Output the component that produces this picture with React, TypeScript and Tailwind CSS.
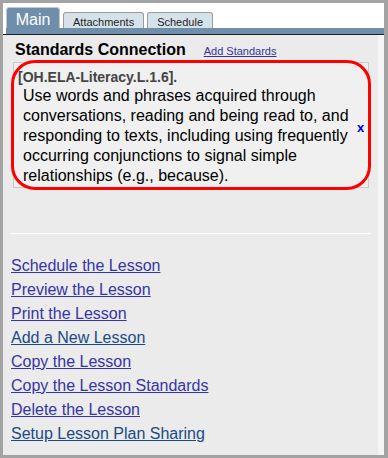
import type { ReactNode } from "react";

const font = "font-['Liberation_Sans',Arial,sans-serif]";

const links = [
  { label: "Schedule the Lesson", visited: true },
  { label: "Preview the Lesson", visited: true },
  { label: "Print the Lesson", visited: true },
  { label: "Add a New Lesson", visited: false },
  { label: "Copy the Lesson", visited: true },
  { label: "Copy the Lesson Standards", visited: true },
  { label: "Delete the Lesson", visited: true },
  { label: "Setup Lesson Plan Sharing", visited: false },
];

function Tab({ children }: { children: ReactNode }) {
  return (
    <div className="flex h-[16px] items-start rounded-t-[3px] border border-b-0 border-[#9c9c9c] bg-[#d6e2ea] px-[9px] pt-[2px] text-[11px] leading-[14px] text-[#222]">
      {children}
    </div>
  );
}

export default function App() {
  return (
    <div
      className={`${font} flex h-[458px] w-[388px] flex-col border-b-[3px] border-l-[3px] border-r-[4px] border-t-[3px] border-[#a3a3a3] bg-white`}
    >
      {/* tabs */}
      <div className="flex h-[25px] items-end gap-[3px] pl-[3px]">
        <div className="flex h-[21px] w-[54px] items-start justify-center rounded-t-[3px] border border-b-0 border-[#c6c6c6] bg-[#6f8eab] pt-[4px] text-[16px] leading-[16px] text-white">
          Main
        </div>
        <Tab>Attachments</Tab>
        <Tab>Schedule</Tab>
      </div>
      <div className="ml-[3px] h-[6px] bg-[#6f8eab]" />
      <div className="h-px bg-[#1e1e1e]" />

      {/* content */}
      <div className="flex flex-1">
        <div className="flex-1 bg-[#ebebeb]">
          <div className="flex items-baseline gap-[18px] pl-[12px] pt-[5px]">
            <h2 className="text-[16px] font-bold leading-[20px] text-black">Standards Connection</h2>
            <a href="#" className="text-[11px] leading-[14px] text-[#3333a0] underline">
              Add Standards
            </a>
          </div>

          <div className="pl-[10px] pt-[2px]">
            <div className="relative w-[356px]">
              <div className="flex border border-[#c8c8c8] bg-[#f0f0f0] pb-[1px] pl-[4px] pt-[5px]">
                <div className="w-[339px]">
                  <div className="text-[14px] font-bold leading-[18px] text-[#444]">
                    [OH.ELA-Literacy.L.1.6].
                  </div>
                  <p className="pl-[5px] text-[16px] leading-[20px] text-black">
                    Use words and phrases acquired through conversations, reading and being read to, and
                    responding to texts, including using frequently occurring conjunctions to signal simple
                    relationships (e.g., because).
                  </p>
                </div>
                <div className="flex flex-1 items-center">
                  <span className="text-[13px] font-bold leading-none text-[#0000dd]">x</span>
                </div>
              </div>
              {/* annotation ring */}
              <div className="pointer-events-none absolute -inset-[2px] rounded-[24px] border-[3px] border-[#ff0000]" />
            </div>
          </div>

          <div className="ml-[8px] mt-[45px] h-px w-[360px] bg-white" />

          <div className="flex flex-col items-start pl-[8px] pt-[20px]">
            {links.map((l) => (
              <a
                key={l.label}
                href="#"
                className={`text-[16px] leading-[24px] underline ${l.visited ? "text-[#3535a6]" : "text-[#1a4a85]"}`}
              >
                {l.label}
              </a>
            ))}
          </div>
        </div>
        <div className="w-[6px] bg-[#f5f5f5]" />
      </div>
    </div>
  );
}
